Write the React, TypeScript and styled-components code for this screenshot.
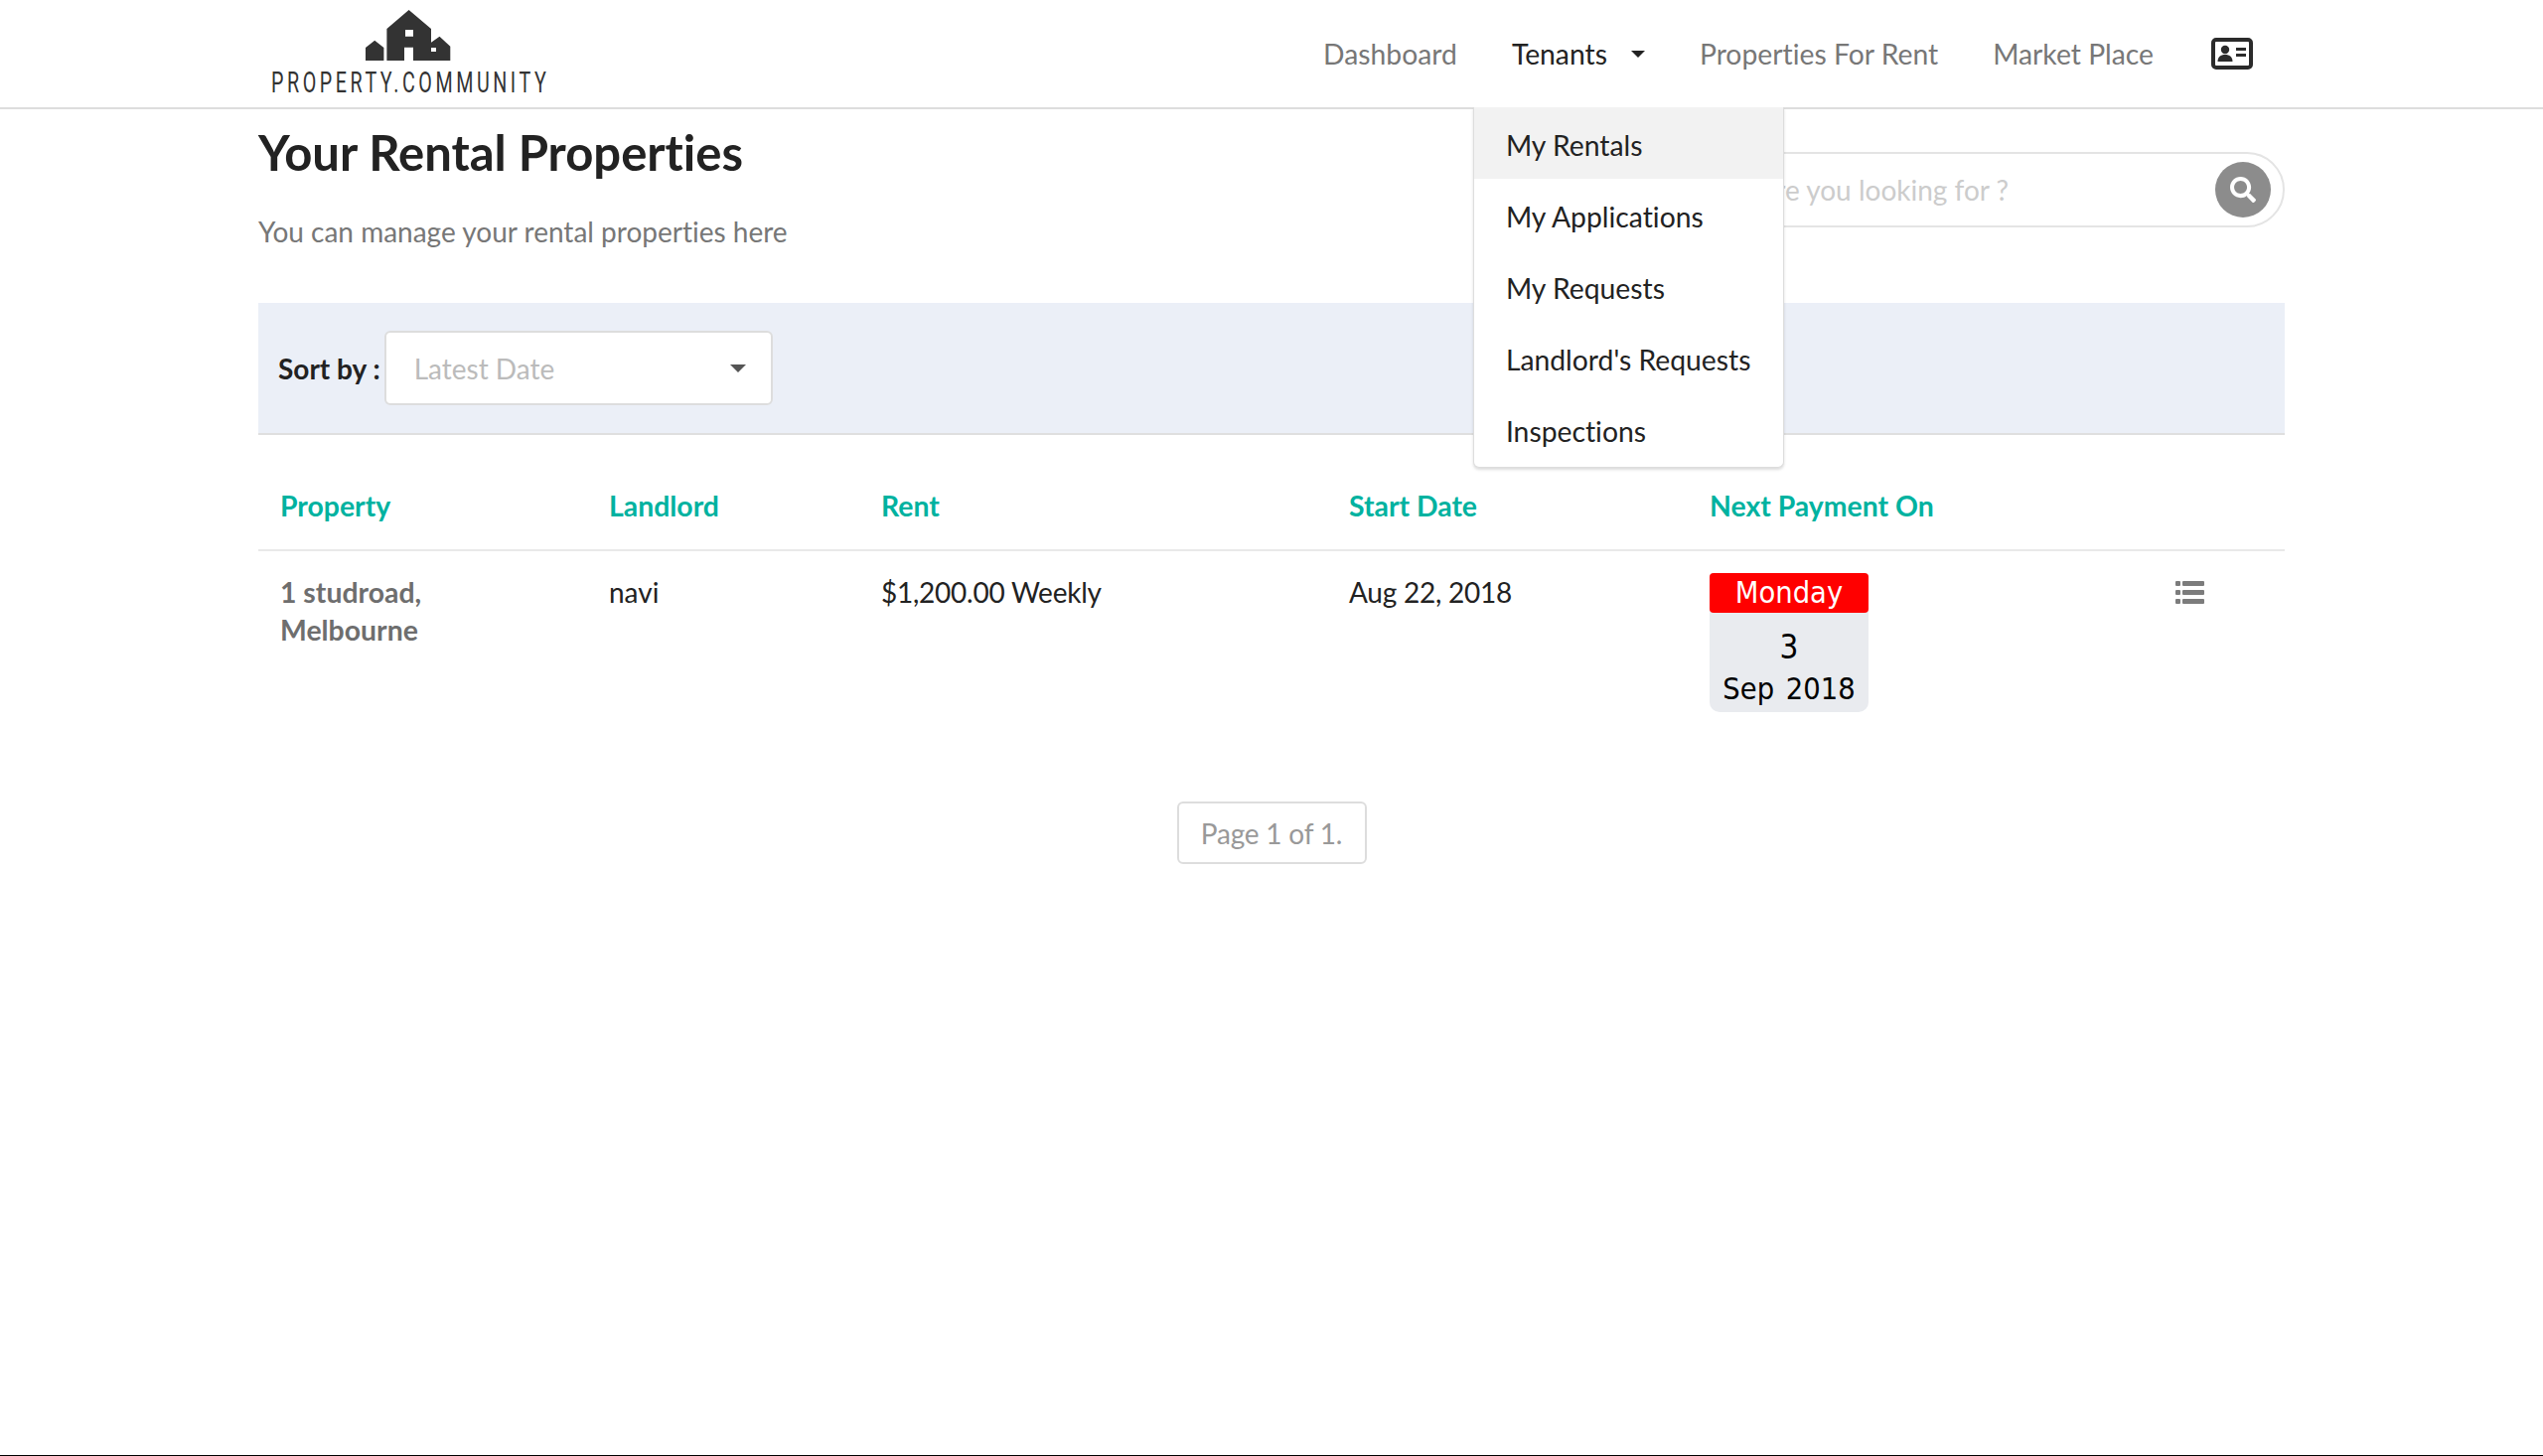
import React from 'react';
import styled, { createGlobalStyle } from 'styled-components';
import { FaSearch } from 'react-icons/fa';

const GlobalStyle = createGlobalStyle`
  html, body {
    margin: 0;
    padding: 0;
    background: #fff;
    font-family: Lato, "Open Sans", sans-serif;
    font-size: 28px;
    font-variant-ligatures: none;
    color: #222;
  }
  * {
    box-sizing: border-box;
  }
`;

const Page = styled.div`
  min-height: 100vh;
  display: flex;
  flex-direction: column;
`;

const Header = styled.header`
  height: 110px;
  border-bottom: 2px solid #ddd;
  flex-shrink: 0;
`;

const HeaderInner = styled.div`
  width: 2040px;
  height: 108px;
  margin: 0 auto;
  display: flex;
  justify-content: space-between;
`;

const Logo = styled.a`
  width: 300px;
  padding-top: 10px;
  padding-left: 13px;
  display: flex;
  flex-direction: column;
  align-items: flex-start;
`;

const HouseMark = styled.svg`
  display: block;
  margin-left: 95px;
`;

const LogoText = styled.span`
  display: block;
  margin-top: 9px;
  font-family: Roboto, sans-serif;
  font-size: 29px;
  line-height: 26px;
  letter-spacing: 5.2px;
  color: #333;
  white-space: nowrap;
  transform: scaleX(0.68);
  transform-origin: left center;
`;

const Nav = styled.nav`
  display: flex;
  align-items: center;
  gap: 55px;
  padding-right: 32px;
`;

const NavItem = styled.div<{ $active?: boolean }>`
  position: relative;
  display: flex;
  align-items: center;
  height: 108px;
  color: ${(p) => (p.$active ? '#222' : '#777')};
  font-size: 28.3px;
`;

const ProfileItem = styled(NavItem)`
  margin-left: 3px;
`;

const Caret = styled.span<{ $size: number; $color: string }>`
  display: inline-block;
  width: 0;
  height: 0;
  border-left: ${(p) => p.$size}px solid transparent;
  border-right: ${(p) => p.$size}px solid transparent;
  border-top: ${(p) => p.$size}px solid ${(p) => p.$color};
`;

const NavCaret = styled(Caret)`
  margin-left: 24px;
`;

const Dropdown = styled.ul`
  position: absolute;
  top: 108px;
  left: -39px;
  width: 313px;
  height: 363px;
  margin: 0;
  padding: 0;
  list-style: none;
  background: #fff;
  border: 1px solid #ddd;
  border-top: none;
  border-radius: 0 0 6px 6px;
  box-shadow: 0 2px 3px rgba(0, 0, 0, 0.14);
  z-index: 5;
`;

const DropdownItem = styled.li<{ $active?: boolean }>`
  height: 72px;
  display: flex;
  align-items: center;
  padding-left: 32px;
  padding-top: 3px;
  background: ${(p) => (p.$active ? '#f2f2f2' : 'transparent')};
  color: #222;
  white-space: nowrap;
`;

const Content = styled.main`
  width: 2040px;
  margin: 0 auto;
`;

const TitleRow = styled.section`
  height: 195px;
  display: flex;
  justify-content: space-between;
  align-items: flex-start;
`;

const Title = styled.h1`
  margin: 12px 0 0;
  font-size: 49px;
  line-height: 62px;
  font-weight: 700;
  color: #222;
`;

const Subtitle = styled.p`
  margin: 32px 0 0;
  font-size: 28px;
  line-height: 34px;
  color: #777;
`;

const SearchBox = styled.div`
  width: 626px;
  height: 76px;
  margin-top: 43px;
  padding: 0 12px 0 22px;
  display: flex;
  align-items: center;
  justify-content: space-between;
  border: 2px solid #e4e4e4;
  border-radius: 38px;
  background: #fff;
`;

const Placeholder = styled.span`
  color: #ccc;
  font-size: 28px;
`;

const SearchButton = styled.span`
  width: 56px;
  height: 56px;
  border-radius: 50%;
  background: #8c8c8c;
  color: #fff;
  display: flex;
  align-items: center;
  justify-content: center;
  font-size: 26px;
`;

const SortBar = styled.section`
  height: 133px;
  padding-left: 20px;
  display: flex;
  align-items: center;
  gap: 4px;
  background: #ebeff7;
  border-bottom: 2px solid #dfdfdf;
`;

const SortLabel = styled.span`
  font-weight: 700;
  color: #222;
  font-size: 28px;
`;

const Select = styled.div`
  width: 391px;
  height: 75px;
  padding: 0 25px 0 28px;
  display: flex;
  align-items: center;
  justify-content: space-between;
  background: #fff;
  border: 2px solid #ddd;
  border-radius: 6px;
  color: #bbb;
`;

const Row = styled.div`
  display: grid;
  grid-template-columns: 331px 274px 471px 363px 468px 133px;
`;

const HeadRow = styled(Row)`
  height: 117px;
  align-items: center;
  border-bottom: 2px solid #e9e9e9;
`;

const HeadCell = styled.div`
  padding: 27px 22px 0;
  color: #00b2a0;
  font-weight: 700;
  font-size: 28.4px;
  white-space: nowrap;
`;

const BodyRow = styled(Row)`
  padding-top: 22px;
`;

const Cell = styled.div`
  padding: 0 22px;
  font-size: 28px;
  line-height: 38px;
  color: #222;
  white-space: nowrap;
`;

const AmountCell = styled(Cell)`
  letter-spacing: -0.25px;
`;

const AddressCell = styled(Cell)`
  color: #6e6e6e;
  font-size: 28.4px;
  font-weight: 700;
  white-space: normal;
`;

const MenuCell = styled.div`
  padding: 0 23px;
  height: 38px;
  display: flex;
  align-items: center;
`;

const CalendarCard = styled.div`
  width: 160px;
  height: 140px;
  border-radius: 4px 4px 10px 10px;
  background: #e9ebef;
  font-family: "DejaVu Sans Condensed", "DejaVu Sans", sans-serif;
  text-align: center;
  color: #000;
`;

const CalendarDay = styled.div`
  height: 40px;
  line-height: 40px;
  border-radius: 4px;
  background: #f00;
  color: #fff;
  font-size: 30.5px;
`;

const CalendarNumber = styled.div`
  margin-top: 15px;
  line-height: 40px;
  font-size: 33px;
`;

const CalendarMonth = styled.div`
  line-height: 44px;
  font-size: 30.5px;
  word-spacing: 3px;
`;

const Pagination = styled.div`
  display: flex;
  justify-content: center;
  margin-top: 90px;
`;

const PageLabel = styled.div`
  width: 191px;
  height: 63px;
  display: flex;
  align-items: center;
  justify-content: center;
  border: 2px solid #ddd;
  border-radius: 6px;
  color: #999;
  font-size: 28px;
  letter-spacing: -0.2px;
`;

const Spacer = styled.div`
  flex: 1;
`;

const BottomLine = styled.div`
  height: 1px;
  background: #000;
`;

const HouseLogo: React.FC = () => (
  <HouseMark width="86" height="51" viewBox="0 10 86 51">
    <path
      fill="#333"
      fillRule="evenodd"
      d="M43.6 10 66 29V42.7L74.5 36.7 85.3 46.7V61H48V47.7H39V61H21.4V29ZM40 30V36.7H48V30ZM66 48V52H71V48ZM0 48 9.2 40.7 18.4 48V61H0Z"
    />
  </HouseMark>
);

const ListIcon: React.FC = () => (
  <svg width="29" height="23" viewBox="0 0 29 23">
    <g fill="#7c7c7c">
      <rect x="0" y="0" width="5" height="5" rx="1" />
      <rect x="7" y="0" width="22" height="5" rx="1" />
      <rect x="0" y="9" width="5" height="5" rx="1" />
      <rect x="7" y="9" width="22" height="5" rx="1" />
      <rect x="0" y="18" width="5" height="5" rx="1" />
      <rect x="7" y="18" width="22" height="5" rx="1" />
    </g>
  </svg>
);

const ProfileCardIcon: React.FC = () => (
  <svg width="42" height="32" viewBox="0 0 42 32">
    <rect x="2" y="2" width="38" height="28" rx="3" fill="#fff" stroke="#2b2b2b" strokeWidth="4" />
    <circle cx="14" cy="12" r="4.2" fill="#2b2b2b" />
    <path d="M6.5 24c0-4.6 3-7 7.5-7s7.5 2.4 7.5 7z" fill="#2b2b2b" />
    <rect x="25" y="10" width="10" height="3" fill="#2b2b2b" />
    <rect x="25" y="16" width="10" height="3" fill="#2b2b2b" />
  </svg>
);

const menuItems = ['My Rentals', 'My Applications', 'My Requests', "Landlord's Requests", 'Inspections'];
const columns = ['Property', 'Landlord', 'Rent', 'Start Date', 'Next Payment On'];

const App: React.FC = () => (
  <Page>
    <GlobalStyle />
    <Header>
      <HeaderInner>
        <Logo>
          <HouseLogo />
          <LogoText>PROPERTY.COMMUNITY</LogoText>
        </Logo>
        <Nav>
          <NavItem>Dashboard</NavItem>
          <NavItem $active>
            Tenants
            <NavCaret $size={7} $color="#222" />
            <Dropdown>
              {menuItems.map((item, i) => (
                <DropdownItem key={item} $active={i === 0}>
                  {item}
                </DropdownItem>
              ))}
            </Dropdown>
          </NavItem>
          <NavItem>Properties For Rent</NavItem>
          <NavItem>Market Place</NavItem>
          <ProfileItem $active>
            <ProfileCardIcon />
          </ProfileItem>
        </Nav>
      </HeaderInner>
    </Header>
    <Content>
      <TitleRow>
        <div>
          <Title>Your Rental Properties</Title>
          <Subtitle>You can manage your rental properties here</Subtitle>
        </div>
        <SearchBox>
          <Placeholder>What are you looking for ?</Placeholder>
          <SearchButton>
            <FaSearch />
          </SearchButton>
        </SearchBox>
      </TitleRow>
      <SortBar>
        <SortLabel>Sort by :</SortLabel>
        <Select>
          Latest Date
          <Caret $size={8} $color="#555" />
        </Select>
      </SortBar>
      <HeadRow>
        {columns.map((c) => (
          <HeadCell key={c}>{c}</HeadCell>
        ))}
      </HeadRow>
      <BodyRow>
        <AddressCell>
          1 studroad,
          <br />
          Melbourne
        </AddressCell>
        <Cell>navi</Cell>
        <AmountCell>$1,200.00 Weekly</AmountCell>
        <AmountCell>Aug 22, 2018</AmountCell>
        <Cell>
          <CalendarCard>
            <CalendarDay>Monday</CalendarDay>
            <CalendarNumber>3</CalendarNumber>
            <CalendarMonth>Sep 2018</CalendarMonth>
          </CalendarCard>
        </Cell>
        <MenuCell>
          <ListIcon />
        </MenuCell>
      </BodyRow>
      <Pagination>
        <PageLabel>Page 1 of 1.</PageLabel>
      </Pagination>
    </Content>
    <Spacer />
    <BottomLine />
  </Page>
);

export default App;
